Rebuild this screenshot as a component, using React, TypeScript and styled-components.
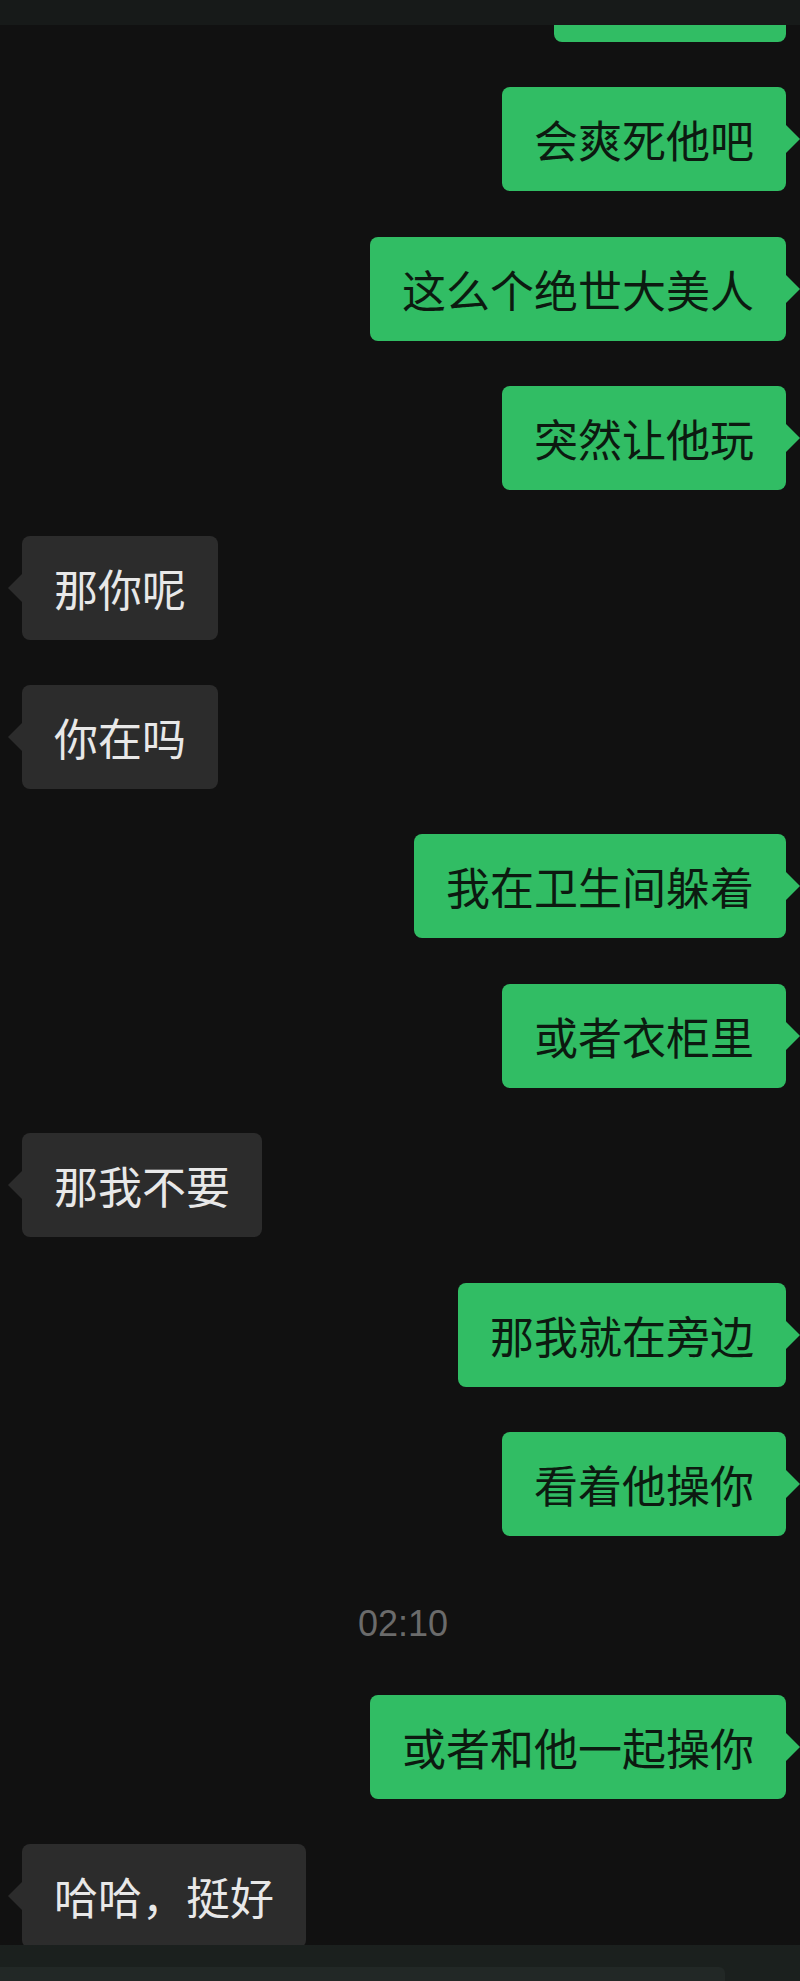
import React from "react";
import styled, { createGlobalStyle, css } from "styled-components";

const GlobalStyle = createGlobalStyle`
  html, body {
    margin: 0;
    padding: 0;
    background: #111111;
  }
  body {
    font-family: "Noto Sans CJK SC", "Noto Sans", sans-serif;
  }
`;

const Screen = styled.div`
  width: 800px;
  height: 1981px;
  display: flex;
  flex-direction: column;
  background: #111111;
  overflow: hidden;
`;

const TopStrip = styled.div`
  height: 25px;
  flex: none;
  background: #171a19;
`;

const ChatArea = styled.div`
  flex: 1;
  min-height: 0;
  overflow: hidden;
  display: flex;
  flex-direction: column;
  gap: 45.4px;
`;

type Side = "me" | "them";

const Row = styled.div<{ $side: Side; $first?: boolean }>`
  display: flex;
  justify-content: ${(p) => (p.$side === "me" ? "flex-end" : "flex-start")};
  padding: ${(p) => (p.$side === "me" ? "0 14px 0 0" : "0 0 0 22px")};
  margin-top: ${(p) => (p.$first ? "-87px" : "0")};
  flex: none;
`;

const Bubble = styled.div<{ $side: Side }>`
  position: relative;
  height: 104px;
  box-sizing: border-box;
  padding: 22px 32px;
  border-radius: 8px;
  font-size: 44px;
  line-height: 60px;
  white-space: nowrap;
  ${(p) =>
    p.$side === "me"
      ? css`
          background: #31bd64;
          color: #0c1a10;
        `
      : css`
          background: #2c2c2c;
          color: #e8e8e8;
        `}

  &::after {
    content: "";
    position: absolute;
    top: 50%;
    margin-top: -14px;
    border-top: 14px solid transparent;
    border-bottom: 14px solid transparent;
    ${(p) =>
      p.$side === "me"
        ? css`
            right: -14px;
            border-left: 14px solid #31bd64;
          `
        : css`
            left: -14px;
            border-right: 14px solid #2c2c2c;
          `}
  }
`;

const PartialBubble = styled(Bubble)`
  width: 232px;
`;

const TimeStamp = styled.div`
  flex: none;
  height: 68px;
  box-sizing: border-box;
  padding: 23px 0 0 6px;
  text-align: center;
  font-family: "Liberation Sans", Arial, sans-serif;
  font-size: 36px;
  line-height: 40px;
  color: #6b6b6b;
`;

const BottomBar = styled.div`
  height: 36px;
  flex: none;
  background: #1b201e;
  display: flex;
  flex-direction: column;
  justify-content: flex-end;
`;

const InputStub = styled.div`
  height: 14px;
  width: 725px;
  background: #222826;
  border-top-right-radius: 6px;
`;

type Item =
  | { kind: "msg"; side: Side; text: string }
  | { kind: "time"; text: string };

const items: Item[] = [
  { kind: "msg", side: "me", text: "会爽死他吧" },
  { kind: "msg", side: "me", text: "这么个绝世大美人" },
  { kind: "msg", side: "me", text: "突然让他玩" },
  { kind: "msg", side: "them", text: "那你呢" },
  { kind: "msg", side: "them", text: "你在吗" },
  { kind: "msg", side: "me", text: "我在卫生间躲着" },
  { kind: "msg", side: "me", text: "或者衣柜里" },
  { kind: "msg", side: "them", text: "那我不要" },
  { kind: "msg", side: "me", text: "那我就在旁边" },
  { kind: "msg", side: "me", text: "看着他操你" },
  { kind: "time", text: "02:10" },
  { kind: "msg", side: "me", text: "或者和他一起操你" },
  { kind: "msg", side: "them", text: "哈哈，挺好" },
];

export default function App() {
  return (
    <>
      <GlobalStyle />
      <Screen>
        <TopStrip />
        <ChatArea>
          <Row $side="me" $first>
            <PartialBubble $side="me" />
          </Row>
          {items.map((it, i) =>
            it.kind === "time" ? (
              <TimeStamp key={i}>{it.text}</TimeStamp>
            ) : (
              <Row key={i} $side={it.side}>
                <Bubble $side={it.side}>{it.text}</Bubble>
              </Row>
            )
          )}
        </ChatArea>
        <BottomBar>
          <InputStub />
        </BottomBar>
      </Screen>
    </>
  );
}
